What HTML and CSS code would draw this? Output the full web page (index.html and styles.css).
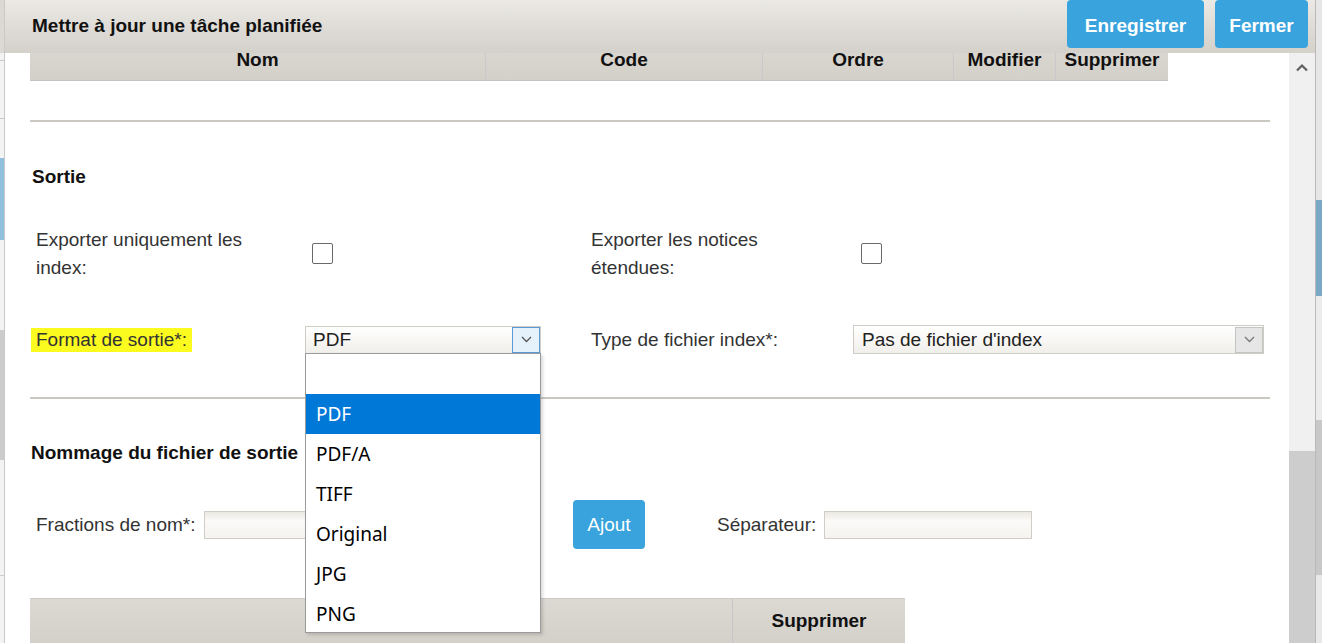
FILE: index.html
```html
<!DOCTYPE html>
<html lang="fr">
<head>
<meta charset="utf-8">
<title>Mettre à jour une tâche planifiée</title>
<link rel="stylesheet" href="styles.css">
</head>
<body>
<div class="page">
  <div class="page-left"></div>
  <div class="dialog">
    <div class="dlg-header">
      <h1 class="dlg-title">Mettre à jour une tâche planifiée</h1>
      <div class="header-actions">
        <button class="btn btn-header btn-save">Enregistrer</button>
        <button class="btn btn-header btn-close">Fermer</button>
      </div>
    </div>
    <div class="dlg-body">
      <div class="content">
        <div class="grid-head">
          <div class="th">Nom</div>
          <div class="th">Code</div>
          <div class="th">Ordre</div>
          <div class="th">Modifier</div>
          <div class="th">Supprimer</div>
        </div>

        <div class="divider first"></div>

        <h2 class="section-title">Sortie</h2>

        <div class="form-row row-checks">
          <div class="label label-wrap">Exporter uniquement les index:</div>
          <div class="cell"><span class="checkbox"></span></div>
          <div class="label label-wrap col3">Exporter les notices étendues:</div>
          <div class="cell"><span class="checkbox cb-right"></span></div>
        </div>

        <div class="form-row row-selects">
          <div class="label"><span class="hl">Format de sortie*:</span></div>
          <div class="cell">
            <div class="select select-format">
              <span class="select-value">PDF</span>
              <span class="select-btn active">
                <svg width="11" height="7" viewBox="0 0 11 7"><path d="M1 1 L5.5 5.5 L10 1" fill="none" stroke="#555" stroke-width="1.3"/></svg>
              </span>
              <ul class="options">
                <li class="option"></li>
                <li class="option selected">PDF</li>
                <li class="option">PDF/A</li>
                <li class="option">TIFF</li>
                <li class="option">Original</li>
                <li class="option">JPG</li>
                <li class="option">PNG</li>
              </ul>
            </div>
          </div>
          <div class="label col3">Type de fichier index*:</div>
          <div class="cell">
            <div class="select select-wide">
              <span class="select-value">Pas de fichier d'index</span>
              <span class="select-btn">
                <svg width="11" height="7" viewBox="0 0 11 7"><path d="M1 1 L5.5 5.5 L10 1" fill="none" stroke="#777" stroke-width="1.3"/></svg>
              </span>
            </div>
          </div>
        </div>

        <div class="divider second"></div>

        <h2 class="section-title title-naming">Nommage du fichier de sortie</h2>

        <div class="name-row">
          <div class="name-label">Fractions de nom*:</div>
          <div class="text-input input-fractions"></div>
          <button class="btn btn-add">Ajout</button>
          <div class="sep-label">Séparateur:</div>
          <div class="text-input input-sep"></div>
        </div>

        <div class="grid-foot">
          <div class="tf"></div>
          <div class="tf">Supprimer</div>
        </div>
      </div>
      <div class="scrollbar">
        <div class="scroll-up">
          <svg width="14" height="9" viewBox="0 0 14 9"><path d="M2 7.5 L7 2.5 L12 7.5" fill="none" stroke="#5f5f5f" stroke-width="2.2"/></svg>
        </div>
        <div class="scroll-track"></div>
        <div class="scroll-thumb"></div>
      </div>
    </div>
  </div>
  <div class="page-right"></div>
</div>
</body>
</html>
```

FILE: styles.css
```css
html, body {
  margin: 0;
  padding: 0;
}

body {
  font-family: "Liberation Sans", Arial, sans-serif;
  background: #eeeeee;
  overflow: hidden;
}

.page {
  display: flex;
  height: 643px;
}

.page-left {
  width: 4px;
  flex: none;
  background: linear-gradient(to bottom,
    #dcd9d4 0 53px,
    #f3f3f3 53px 60px,
    #c9c9c9 60px 61px,
    #f3f3f3 61px 118px,
    #c9c9c9 118px 119px,
    #f3f3f3 119px 158px,
    #8fc0dc 158px 240px,
    #f3f3f3 240px 330px,
    #cccccc 330px 460px,
    #f3f3f3 460px 575px,
    #cfcfcf 575px 576px,
    #f3f3f3 576px);
}

.page-right {
  flex: 1;
  background: linear-gradient(to bottom,
    #e6e6e6 0 200px,
    #7aa9c8 200px 296px,
    #ececec 296px 420px,
    #c8c8c8 420px 575px,
    #e8e8e8 575px);
}

.dialog {
  width: 1312px;
  flex: none;
  box-sizing: border-box;
  display: flex;
  flex-direction: column;
  background: #ffffff;
  border-left: 1px solid #c9c9c9;
  border-right: 1px solid #b9b9b9;
}

/* Header (sticky bar over the scrolled content) */
.dlg-header {
  position: relative;
  z-index: 2;
  height: 53px;
  flex: none;
  display: flex;
  align-items: flex-start;
  padding: 0 7px 0 27px;
  background: linear-gradient(to bottom, #ebe9e5, #d4d0ca);
}

.dlg-title {
  margin: 15px 0 0;
  font-size: 19px;
  line-height: 22px;
  font-weight: bold;
  color: #111111;
}

.header-actions {
  margin-left: auto;
  display: flex;
  gap: 11px;
}

.btn {
  border: 0;
  border-radius: 4px;
  background: #38a3dc;
  color: #ffffff;
  font-family: "Liberation Sans", Arial, sans-serif;
  font-size: 19px;
  padding: 0;
  text-align: center;
}

.btn-header {
  height: 48px;
  padding-top: 3px;
  font-weight: bold;
}

.btn-save {
  width: 137px;
}

.btn-close {
  width: 93px;
}

/* Body */
.dlg-body {
  flex: 1;
  display: flex;
  min-height: 0;
}

.content {
  flex: 1;
  min-width: 0;
  padding: 0 19px 0 25px;
}

.scrollbar {
  width: 26px;
  flex: none;
  background: #f0f0f0;
  display: flex;
  flex-direction: column;
}

.scroll-up {
  height: 30px;
  display: flex;
  justify-content: center;
  align-items: flex-start;
  padding-top: 10px;
  box-sizing: border-box;
}

.scroll-track {
  flex: 1;
}

.scroll-thumb {
  height: 192px;
  background: #cdcdcd;
}

/* Tables */
.grid-head {
  display: grid;
  grid-template-columns: 455px 277px 191px 102px 113px;
  width: 1138px;
  height: 32px;
  margin-top: -4px;
  box-sizing: border-box;
  background: linear-gradient(to bottom, #dad6d0, #d3cfc9);
  border-bottom: 1px solid #c6c2c2;
}

.th {
  text-align: center;
  font-weight: bold;
  font-size: 19px;
  line-height: 22px;
  color: #111111;
  border-left: 1px solid #cbc7cf;
  white-space: nowrap;
}

.th:first-child {
  border-left: 0;
}

.grid-foot {
  display: grid;
  grid-template-columns: 702px 173px;
  width: 875px;
  height: 48px;
  margin-top: 49px;
  box-sizing: border-box;
  background: linear-gradient(to bottom, #dcd8d2, #d3cfc9);
  border-top: 1px solid #cfcbc5;
}

.tf {
  text-align: center;
  font-weight: bold;
  font-size: 19px;
  line-height: 43px;
  color: #111111;
}

.tf + .tf {
  border-left: 1px solid #c8c4cc;
}

/* Dividers and titles */
.divider {
  height: 2px;
  background: #cbc8c2;
}

.divider.first {
  margin-top: 39px;
}

.divider.second {
  margin-top: 43px;
}

.section-title {
  margin: 44px 0 0 2px;
  font-size: 19px;
  line-height: 22px;
  font-weight: bold;
  color: #111111;
}

.section-title.title-naming {
  margin-top: 43px;
  margin-left: 1px;
}

/* Form rows */
.form-row {
  display: grid;
  grid-template-columns: 275px 286px 262px 411px;
  align-items: center;
}

.row-checks {
  margin-top: 38px;
}

.row-selects {
  margin-top: 43px;
}

.label {
  font-size: 19px;
  line-height: 28px;
  color: #333333;
  padding-left: 6px;
}

.label.col3 {
  padding-left: 0;
}

.label-wrap {
  width: 230px;
}

.cell {
  display: flex;
  align-items: center;
}

.checkbox {
  display: block;
  width: 21px;
  height: 21px;
  box-sizing: border-box;
  border: 1.5px solid #6a6a6a;
  border-radius: 2px;
  background: #ffffff;
  margin-left: 7px;
  margin-top: -2px;
}

.checkbox.cb-right {
  margin-left: 8px;
}

.hl {
  background: #fbfb1f;
  padding: 0 5px;
  margin-left: -5px;
  line-height: 24px;
  display: inline-block;
  color: #333333;
}

/* Selects */
.select {
  position: relative;
  width: 236px;
  height: 28px;
  box-sizing: border-box;
  border: 1px solid #cfccc6;
  background: linear-gradient(to bottom, #ffffff, #f1efea);
  display: flex;
  align-items: center;
}

.select-wide {
  width: 411px;
  height: 29px;
}

.select-value {
  flex: 1;
  padding-left: 7px;
  font-size: 19px;
  color: #222222;
  white-space: nowrap;
}

.select-wide .select-value {
  padding-left: 8px;
}

.select-btn {
  width: 28px;
  height: 26px;
  box-sizing: border-box;
  border: 1px solid #c4c4c4;
  background: #e6e6e6;
  display: flex;
  align-items: center;
  justify-content: center;
}

.select-btn.active {
  border-color: #5b9bd5;
  background: #e5f1fb;
}

.options {
  position: absolute;
  top: 100%;
  left: -1px;
  width: 236px;
  height: 280px;
  margin: 0;
  padding: 0;
  list-style: none;
  box-sizing: border-box;
  overflow: hidden;
  background: #ffffff;
  border: 1px solid #9a9a9a;
  box-shadow: 2px 2px 3px rgba(0, 0, 0, 0.15);
  z-index: 5;
  font-family: "Noto Sans", "Open Sans", sans-serif;
  font-size: 19px;
}

.option {
  height: 40px;
  line-height: 40px;
  padding-left: 10px;
  color: #000000;
}

.option.selected {
  background: #0078d7;
  color: #ffffff;
}

/* Naming row */
.name-row {
  margin-top: 36px;
  height: 49px;
  display: flex;
  align-items: center;
}

.name-label {
  width: 174px;
  box-sizing: border-box;
  padding-left: 6px;
  font-size: 19px;
  color: #333333;
  white-space: nowrap;
}

.text-input {
  height: 28px;
  box-sizing: border-box;
  border: 1px solid #d0cdc7;
  background: linear-gradient(to bottom, #ebe8e2, #fbfaf8 35%, #f5f3ef);
}

.input-fractions {
  width: 316px;
}

.btn-add {
  width: 72px;
  height: 49px;
  margin-left: 53px;
}

.sep-label {
  margin-left: 72px;
  font-size: 19px;
  color: #333333;
  white-space: nowrap;
}

.input-sep {
  width: 208px;
  margin-left: 8px;
}
```
